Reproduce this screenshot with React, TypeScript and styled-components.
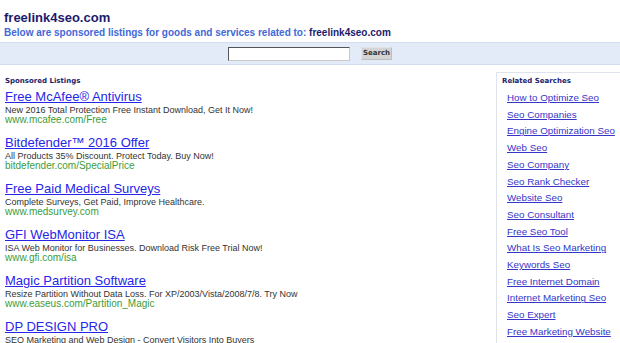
import React from "react";
import styled, { createGlobalStyle } from "styled-components";

const GlobalStyle = createGlobalStyle`
  html, body {
    margin: 0;
    padding: 0;
    background: #fff;
    overflow: hidden;
  }
  body {
    font-family: "Liberation Sans", Arial, sans-serif;
  }
`;

const Page = styled.div`
  width: 660px;
`;

const Header = styled.div`
  padding: 10px 0 0 4px;
  height: 32px;
`;

const SiteTitle = styled.div`
  font-size: 13px;
  font-weight: bold;
  line-height: 15px;
  color: #1b1b6b;
  height: 17px;
`;

const Subtitle = styled.div`
  font-size: 10px;
  font-weight: bold;
  line-height: 12px;
  color: #4169d8;

  b {
    color: #1b1b6b;
  }
`;

const SearchBar = styled.div`
  height: 21px;
  width: 620px;
  background: #e4ebf8;
  border-top: 1px solid #d3ddf0;
  border-bottom: 1px solid #d3ddf0;
  display: flex;
  align-items: center;
  justify-content: center;
  gap: 11px;
`;

const SearchInput = styled.input`
  box-sizing: border-box;
  width: 122px;
  height: 14px;
  padding: 0;
  margin: 0;
  background: #fff;
  border: 1px solid #c8c8c8;
  border-top-color: #555;
  border-left-color: #555;
  outline: none;
`;

const SearchButton = styled.button`
  box-sizing: border-box;
  width: 31px;
  height: 13px;
  padding: 0;
  margin: 0;
  background: #d4d4d4;
  border: 1px solid #e2e2e2;
  border-right-color: #bdbdbd;
  border-bottom-color: #bdbdbd;
  font-family: "DejaVu Sans", Verdana, sans-serif;
  font-size: 7px;
  font-weight: bold;
  color: #333;
  line-height: 11px;
`;

const Body = styled.div`
  display: flex;
  align-items: flex-start;
  padding-top: 7px;
`;

const Main = styled.div`
  width: 491px;
  padding: 4px 0 0 5px;
`;

const SectionHead = styled.div<{ $gap?: number }>`
  font-family: "DejaVu Sans", Verdana, sans-serif;
  font-size: 7px;
  font-weight: bold;
  color: #1b1b6b;
  line-height: 10px;
  height: 11px;
  margin-bottom: ${(p) => p.$gap ?? 0}px;
`;

const Listing = styled.div`
  margin-bottom: 11px;
`;

const ListingTitle = styled.a`
  display: block;
  font-size: 13px;
  line-height: 15px;
  color: #2626e8;
  text-decoration: underline;
  width: fit-content;
`;

const ListingDesc = styled.div`
  font-size: 9px;
  line-height: 12px;
  color: #333;
`;

const ListingUrl = styled.div`
  font-size: 10px;
  line-height: 8px;
  color: #3c9c3c;
`;

const Sidebar = styled.div`
  width: 150px;
  border: 1px solid #dfe4ec;
  padding: 3px 0 0 5px;
  min-height: 280px;
`;

const RelatedLink = styled.a`
  display: block;
  margin-left: 5px;
  font-size: 9.8px;
  line-height: 16.7px;
  color: #3535c8;
  text-decoration: underline;
  white-space: nowrap;
  width: fit-content;
`;

const listings = [
  {
    title: "Free McAfee® Antivirus",
    desc: "New 2016 Total Protection Free Instant Download, Get It Now!",
    url: "www.mcafee.com/Free",
  },
  {
    title: "Bitdefender™ 2016 Offer",
    desc: "All Products 35% Discount. Protect Today. Buy Now!",
    url: "bitdefender.com/SpecialPrice",
  },
  {
    title: "Free Paid Medical Surveys",
    desc: "Complete Surveys, Get Paid, Improve Healthcare.",
    url: "www.medsurvey.com",
  },
  {
    title: "GFI WebMonitor ISA",
    desc: "ISA Web Monitor for Businesses. Download Risk Free Trial Now!",
    url: "www.gfi.com/isa",
  },
  {
    title: "Magic Partition Software",
    desc: "Resize Partition Without Data Loss. For XP/2003/Vista/2008/7/8. Try Now",
    url: "www.easeus.com/Partition_Magic",
  },
  {
    title: "DP DESIGN PRO",
    desc: "SEO Marketing and Web Design - Convert Visitors Into Buyers",
    url: "www.dpdesignpro.com",
  },
];

const related = [
  "How to Optimize Seo",
  "Seo Companies",
  "Engine Optimization Seo",
  "Web Seo",
  "Seo Company",
  "Seo Rank Checker",
  "Website Seo",
  "Seo Consultant",
  "Free Seo Tool",
  "What Is Seo Marketing",
  "Keywords Seo",
  "Free Internet Domain",
  "Internet Marketing Seo",
  "Seo Expert",
  "Free Marketing Website",
];

export default function App() {
  return (
    <Page>
      <GlobalStyle />
      <Header>
        <SiteTitle>freelink4seo.com</SiteTitle>
        <Subtitle>
          Below are sponsored listings for goods and services related to: <b>freelink4seo.com</b>
        </Subtitle>
      </Header>
      <SearchBar>
        <SearchInput type="text" />
        <SearchButton>Search</SearchButton>
      </SearchBar>
      <Body>
        <Main>
          <SectionHead $gap={2}>Sponsored Listings</SectionHead>
          {listings.map((l) => (
            <Listing key={l.title}>
              <ListingTitle href="#">{l.title}</ListingTitle>
              <ListingDesc>{l.desc}</ListingDesc>
              <ListingUrl>{l.url}</ListingUrl>
            </Listing>
          ))}
        </Main>
        <Sidebar>
          <SectionHead $gap={3}>Related Searches</SectionHead>
          {related.map((r) => (
            <RelatedLink href="#" key={r}>
              {r}
            </RelatedLink>
          ))}
        </Sidebar>
      </Body>
    </Page>
  );
}
